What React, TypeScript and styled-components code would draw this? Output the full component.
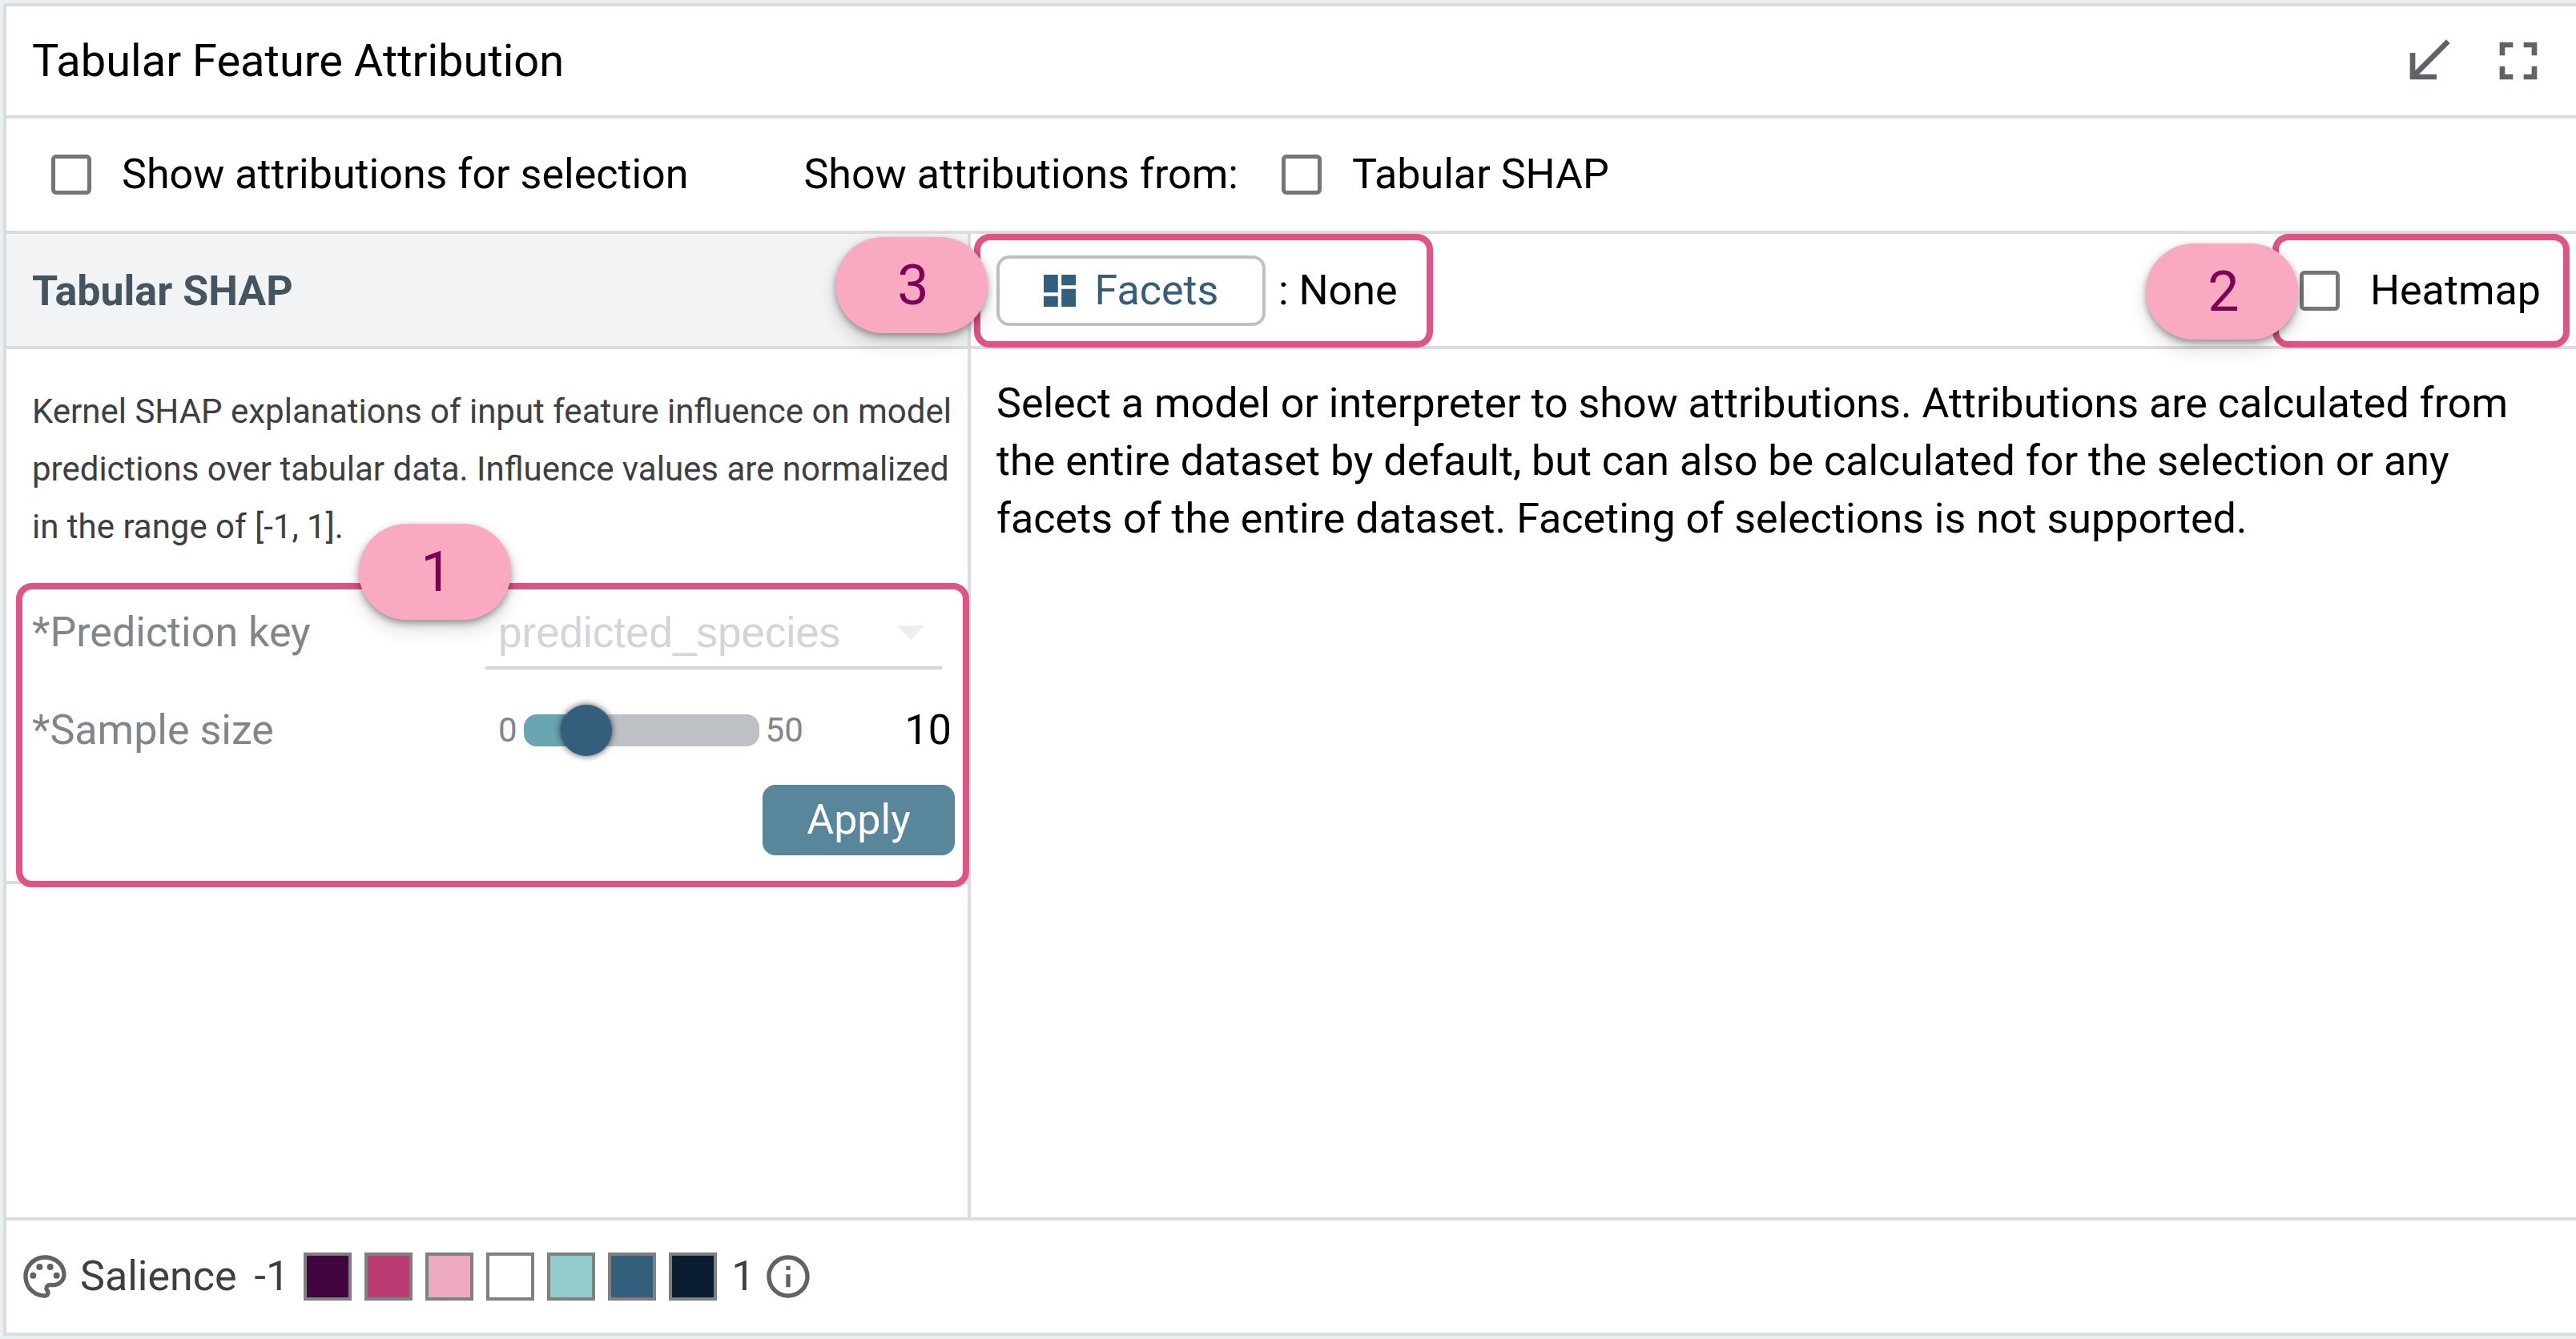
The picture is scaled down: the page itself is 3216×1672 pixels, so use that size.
import React, { useState } from "react";
import styled, { createGlobalStyle, css } from "styled-components";

const palette = {
  line: "#dadce0",
  accent: "#e15286",
  ink: "#345f7c",
  muted: "#80868b",
  icon: "#5f6368",
};

const GlobalStyle = createGlobalStyle`
  *, *::before, *::after { box-sizing: border-box; }
  body {
    margin: 0;
    background: #e8f0f2;
    color: #000;
    font: 400 52px/72px Roboto, "Liberation Sans", sans-serif;
  }
  input, select, button { margin: 0; font: inherit; color: inherit; }
`;

const Page = styled.div`
  display: flex;
  min-height: 100vh;
  padding: 4px 0 4px 4px;
`;

const Panel = styled.main`
  flex: 1;
  display: flex;
  flex-direction: column;
  background: #fff;
  border: 4px solid ${palette.line};
  border-right: 0;
`;

const TitleBar = styled.header`
  display: flex;
  align-items: center;
  height: 140px;
  padding: 0 32px;
  border-bottom: 4px solid ${palette.line};
`;

const Title = styled.h1`
  flex: 1;
  margin: 0;
  font-size: 56px;
  font-weight: 400;
`;

const WindowActions = styled.div`
  display: flex;
  gap: 32px;
`;

const IconButton = styled.button`
  display: flex;
  padding: 0;
  border: 0;
  background: none;
  color: ${palette.icon};
`;

const Icon = styled.svg<{ $size: number }>`
  flex: none;
  width: ${(p) => p.$size}px;
  height: ${(p) => p.$size}px;
  fill: currentColor;
`;

const OptionsBar = styled.div`
  display: flex;
  align-items: center;
  gap: 144px;
  height: 144px;
  padding: 0 56px;
  border-bottom: 4px solid ${palette.line};
`;

const OptionGroup = styled.div`
  display: flex;
  align-items: center;
  gap: 54px;
`;

const CheckLabel = styled.label`
  display: flex;
  align-items: center;
  gap: 38px;
`;

const Checkbox = styled.input`
  appearance: none;
  flex: none;
  width: 50px;
  height: 50px;
  border: 5px solid #767676;
  border-radius: 6px;
  background: #fff;
  &:checked {
    background: ${palette.ink};
  }
`;

const Columns = styled.div`
  flex: 1;
  display: flex;
`;

const Sidebar = styled.section`
  flex: none;
  width: 1204px;
  border-right: 4px solid ${palette.line};
`;

const Content = styled.section`
  flex: 1;
`;

const SidebarHeading = styled.h2`
  display: flex;
  align-items: center;
  height: 144px;
  margin: 0;
  padding: 4px 32px 0;
  border-bottom: 4px solid ${palette.line};
  background: #f1f3f4;
  color: #455560;
  font-size: 52px;
  font-weight: 700;
`;

const Description = styled.p`
  margin: 0;
  padding: 42px 0 34px 32px;
  color: #3c4043;
  font-size: 42px;
`;

const callout = css`
  border: 8px solid ${palette.accent};
  border-radius: 20px;
`;

const ConfigForm = styled.form`
  ${callout}
  position: relative;
  display: flex;
  flex-direction: column;
  height: 380px;
  margin: 0 -2px 0 12px;
  padding: 0 10px 32px 12px;
`;

const Field = styled.div<{ $height: number }>`
  display: grid;
  grid-template-columns: 566px minmax(0, 1fr);
  align-items: center;
  height: ${(p) => p.$height}px;
`;

const FieldLabel = styled.label`
  color: ${palette.muted};
`;

const SelectWrap = styled.div`
  display: flex;
  align-items: center;
  width: 570px;
  height: 88px;
  margin-top: 4px;
  padding-right: 22px;
  border-bottom: 4px solid #d2d4d7;
  color: #d2d4d7;
`;

const Select = styled.select`
  appearance: none;
  flex: 1;
  padding: 0 0 0 16px;
  border: 0;
  background: none;
  font-family: "Liberation Sans", Arial, sans-serif;
  font-size: 53px;
  opacity: 1;
`;

const Caret = styled.svg`
  width: 34px;
  height: 18px;
  fill: #eceef0;
`;

const SliderRow = styled.div`
  display: flex;
  align-items: center;
  gap: 8px;
  padding: 0 4px 0 16px;
`;

const Bound = styled.span`
  color: ${palette.muted};
  font-size: 42px;
`;

const Slider = styled.input<{ $fill: number }>`
  appearance: none;
  flex: none;
  width: 294px;
  height: 40px;
  border-radius: 16px;
  background: linear-gradient(
    to right,
    #6aa5b2 ${(p) => p.$fill}%,
    #bdc1c6 ${(p) => p.$fill}%
  );
  &::-webkit-slider-thumb {
    appearance: none;
    width: 64px;
    height: 64px;
    border-radius: 50%;
    background: ${palette.ink};
    box-shadow: 0 0 8px rgba(0, 0, 0, 0.7);
  }
`;

const NumberBox = styled.input`
  appearance: textfield;
  flex: 1;
  min-width: 0;
  padding: 0;
  border: 0;
  background: none;
  text-align: right;
  &::-webkit-inner-spin-button {
    display: none;
  }
`;

const ApplyButton = styled.button`
  align-self: flex-end;
  width: 240px;
  height: 88px;
  padding: 0;
  border: 0;
  border-radius: 16px;
  background: #58869b;
  color: #fff;
`;

const Divider = styled.hr`
  height: 4px;
  margin: -8px 0 0;
  border: 0;
  background: ${palette.line};
`;

const Toolbar = styled.div`
  display: flex;
  justify-content: space-between;
  height: 144px;
  padding: 0 8px 0 4px;
  border-bottom: 4px solid ${palette.line};
`;

const ToolGroup = styled.div<{ $pad: string }>`
  ${callout}
  position: relative;
  display: flex;
  align-items: center;
  gap: 16px;
  height: 142px;
  padding: ${(p) => p.$pad};
`;

const FacetsButton = styled.button`
  display: flex;
  align-items: center;
  justify-content: center;
  gap: 24px;
  width: 336px;
  height: 88px;
  padding: 0;
  border: 4px solid #bdc1c6;
  border-radius: 16px;
  background: #fff;
  color: ${palette.ink};
`;

const Badge = styled.span<{ $left: number; $top: number }>`
  position: absolute;
  left: ${(p) => p.$left}px;
  top: ${(p) => p.$top}px;
  z-index: 1;
  display: flex;
  align-items: center;
  justify-content: center;
  width: 190px;
  height: 120px;
  padding-left: 4px;
  border-radius: 60px;
  background: #f9a9c0;
  box-shadow: 0 4px 8px rgba(0, 0, 0, 0.35), 0 12px 24px rgba(0, 0, 0, 0.14);
  color: #7b0057;
  font-size: 70px;
`;

const Message = styled.p`
  margin: 0;
  padding: 32px 60px 32px 32px;
`;

const Footer = styled.footer`
  display: flex;
  align-items: center;
  height: 144px;
  padding: 0 16px;
  border-top: 4px solid ${palette.line};
  color: #3c4043;
`;

const LegendIcon = styled.span`
  display: flex;
  color: ${palette.icon};
`;

const LegendText = styled.span`
  margin: 0 8px 0 12px;
`;

const Scale = styled.div`
  display: flex;
  align-items: center;
  gap: 16px;
  margin: 0 8px 0 12px;
`;

const ScaleEnd = styled.span`
  margin: 0 2px;
`;

const Swatch = styled.span<{ $color: string }>`
  width: 60px;
  height: 60px;
  border: 4px solid #808080;
  background: ${(p) => p.$color};
`;

const SALIENCE = [
  "#41053f",
  "#bc3a72",
  "#eeaac0",
  "#ffffff",
  "#91cbcb",
  "#345f7c",
  "#0a1c32",
];

export default function App() {
  const [samples, setSamples] = useState(10);
  const fill = ((32 + (samples / 50) * 230) / 294) * 100;

  return (
    <>
      <GlobalStyle />
      <Page>
        <Panel>
          <TitleBar>
            <Title>Tabular Feature Attribution</Title>
            <WindowActions>
              <IconButton type="button" aria-label="Minimize">
                <Icon $size={80} viewBox="0 0 24 24">
                  <path d="M20 5.41 18.59 4 7 15.59V9H5v10h10v-2H8.41z" />
                </Icon>
              </IconButton>
              <IconButton type="button" aria-label="Full screen">
                <Icon $size={80} viewBox="0 0 24 24">
                  <path d="M7 14H5v5h5v-2H7v-3zm-2-4h2V7h3V5H5v5zm12 7h-3v2h5v-5h-2v3zM14 5v2h3v3h2V5h-5z" />
                </Icon>
              </IconButton>
            </WindowActions>
          </TitleBar>

          <OptionsBar>
            <CheckLabel>
              <Checkbox type="checkbox" />
              Show attributions for selection
            </CheckLabel>
            <OptionGroup>
              <span>Show attributions from:</span>
              <CheckLabel>
                <Checkbox type="checkbox" />
                Tabular SHAP
              </CheckLabel>
            </OptionGroup>
          </OptionsBar>

          <Columns>
            <Sidebar>
              <SidebarHeading>Tabular SHAP</SidebarHeading>
              <Description>
                Kernel SHAP explanations of input feature influence on model
                predictions over tabular data. Influence values are normalized
                <br />
                in the range of [-1, 1].
              </Description>
              <ConfigForm onSubmit={(e) => e.preventDefault()}>
                <Badge $left={420} $top={-82}>1</Badge>
                <Field $height={108}>
                  <FieldLabel htmlFor="prediction-key">*Prediction key</FieldLabel>
                  <SelectWrap>
                    <Select id="prediction-key" disabled>
                      <option>predicted_species</option>
                    </Select>
                    <Caret viewBox="0 0 34 18">
                      <path d="M0 0h34L17 18z" />
                    </Caret>
                  </SelectWrap>
                </Field>
                <Field $height={136}>
                  <FieldLabel htmlFor="sample-size">*Sample size</FieldLabel>
                  <SliderRow>
                    <Bound>0</Bound>
                    <Slider
                      id="sample-size"
                      type="range"
                      min={0}
                      max={50}
                      value={samples}
                      $fill={fill}
                      onChange={(e) => setSamples(Number(e.target.value))}
                    />
                    <Bound>50</Bound>
                    <NumberBox
                      type="number"
                      aria-label="Sample size value"
                      value={samples}
                      onChange={(e) => setSamples(Number(e.target.value))}
                    />
                  </SliderRow>
                </Field>
                <ApplyButton type="submit">Apply</ApplyButton>
              </ConfigForm>
              <Divider />
            </Sidebar>

            <Content>
              <Toolbar>
                <ToolGroup $pad="0 36px 0 20px">
                  <Badge $left={-181} $top={-4}>3</Badge>
                  <FacetsButton type="button">
                    <Icon $size={40} viewBox="0 0 18 18">
                      <path d="M0 0h8v10H0zM10 0h8v6h-8zM0 12h8v6H0zM10 8h8v10h-8z" />
                    </Icon>
                    Facets
                  </FacetsButton>
                  <span>: None</span>
                </ToolGroup>
                <ToolGroup $pad="0 28px 0 26px">
                  <Badge $left={-166} $top={4}>2</Badge>
                  <CheckLabel>
                    <Checkbox type="checkbox" />
                    Heatmap
                  </CheckLabel>
                </ToolGroup>
              </Toolbar>
              <Message>
                Select a model or interpreter to show attributions. Attributions are
                calculated from the entire dataset by default, but can also be
                calculated for the selection or any facets of the entire dataset.
                Faceting of selections is not supported.
              </Message>
            </Content>
          </Columns>

          <Footer>
            <LegendIcon>
              <Icon $size={64} viewBox="0 0 24 24">
                <path d="M12 22C6.490 22 2 17.510 2 12S6.490 2 12 2s10 4.040 10 9c0 3.310-2.690 6-6 6h-1.770c-.28 0-.5.22-.5.5 0 .12.05.23.13.33.41.47.64 1.060.64 1.670A2.500 2.500 0 0 1 12 22zm0-18c-4.410 0-8 3.590-8 8s3.590 8 8 8c.28 0 .5-.22.5-.5a.54.54 0 0 0-.14-.35c-.41-.46-.63-1.050-.63-1.650a2.500 2.500 0 0 1 2.500-2.500H16c2.210 0 4-1.790 4-4 0-3.860-3.590-7-8-7z" />
                <circle cx="6.500" cy="11.500" r="1.500" />
                <circle cx="9.500" cy="7.500" r="1.500" />
                <circle cx="14.500" cy="7.500" r="1.500" />
                <circle cx="17.500" cy="11.500" r="1.500" />
              </Icon>
            </LegendIcon>
            <LegendText>Salience</LegendText>
            <Scale>
              <ScaleEnd>-1</ScaleEnd>
              {SALIENCE.map((color) => (
                <Swatch key={color} $color={color} />
              ))}
              <ScaleEnd>1</ScaleEnd>
            </Scale>
            <LegendIcon>
              <Icon $size={64} viewBox="0 0 24 24">
                <path d="M11 7h2v2h-2zm0 4h2v6h-2zm1-9C6.480 2 2 6.480 2 12s4.480 10 10 10 10-4.480 10-10S17.520 2 12 2zm0 18c-4.410 0-8-3.590-8-8s3.590-8 8-8 8 3.590 8 8-3.590 8-8 8z" />
              </Icon>
            </LegendIcon>
          </Footer>
        </Panel>
      </Page>
    </>
  );
}
